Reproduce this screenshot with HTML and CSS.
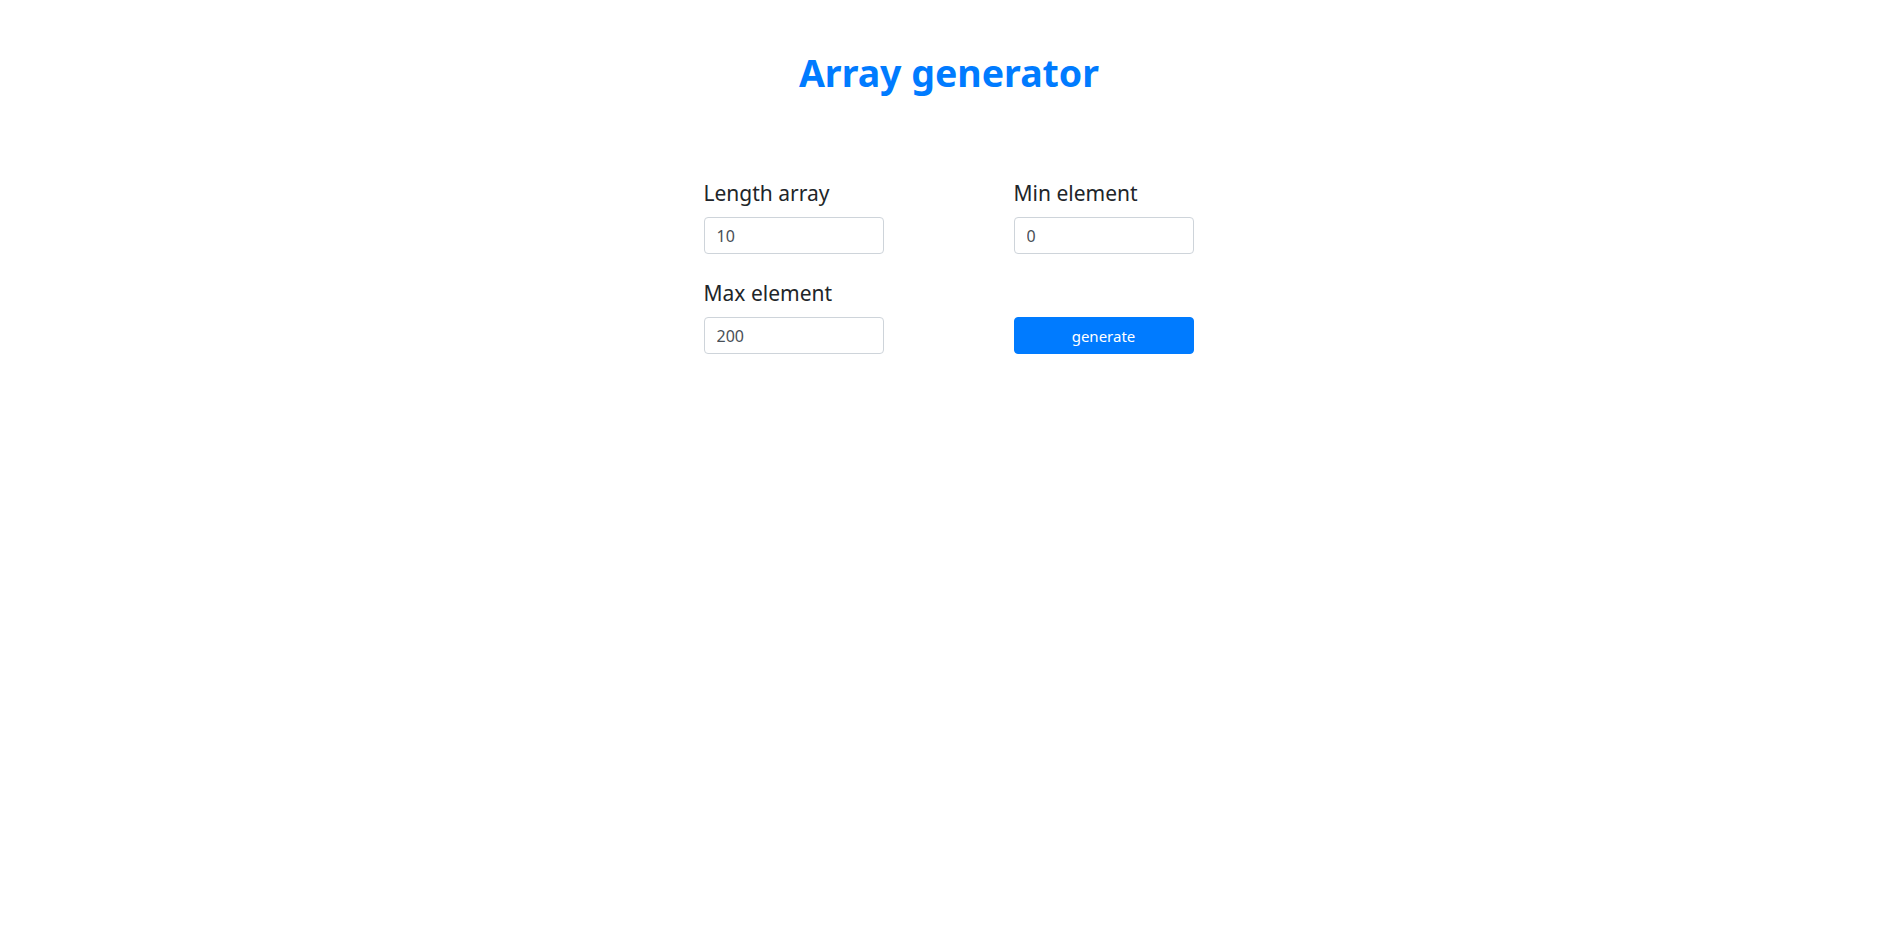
FILE: index.html
```html
<!DOCTYPE html>
<html lang="en">
<head>
<meta charset="utf-8">
<title>Array generator</title>
<link rel="stylesheet" href="styles.css">
</head>
<body>
<main class="page">
  <h1 class="title">Array generator</h1>
  <form class="form">
    <div class="field">
      <label class="label" for="len">Length array</label>
      <input class="input" id="len" type="text" value="10">
    </div>
    <div class="field">
      <label class="label" for="min">Min element</label>
      <input class="input" id="min" type="text" value="0">
    </div>
    <div class="field">
      <label class="label" for="max">Max element</label>
      <input class="input" id="max" type="text" value="200">
    </div>
    <div class="field field-end">
      <button class="button" type="button">generate</button>
    </div>
  </form>
</main>
</body>
</html>
```

FILE: styles.css
```css
html, body {
  margin: 0;
  padding: 0;
  background: #ffffff;
}

body {
  font-family: "Noto Sans", "Open Sans", sans-serif;
  color: #212529;
}

.page {
  padding-top: 50px;
  display: flex;
  flex-direction: column;
  align-items: center;
}

.title {
  margin: 0 0 85px;
  font-size: 37.5px;
  line-height: 45px;
  font-weight: 700;
  color: #007bff;
  text-align: center;
}

.form {
  display: grid;
  grid-template-columns: 180px 180px;
  column-gap: 130px;
  row-gap: 26px;
  margin-left: -1px;
}

.field {
  display: flex;
  flex-direction: column;
}

.field-end {
  justify-content: flex-end;
}

.label {
  font-size: 21px;
  line-height: 26px;
  margin-bottom: 11px;
  color: #212529;
}

.input {
  box-sizing: border-box;
  height: 37px;
  width: 100%;
  padding: 0 12px;
  font-family: inherit;
  font-size: 16px;
  color: #495057;
  background: #ffffff;
  border: 1px solid #ced4da;
  border-radius: 4px;
  outline: none;
}

.button {
  box-sizing: border-box;
  height: 37px;
  width: 100%;
  font-family: inherit;
  font-size: 15px;
  color: #ffffff;
  background: #007bff;
  border: 1px solid #007bff;
  border-radius: 4px;
  cursor: pointer;
}
```
